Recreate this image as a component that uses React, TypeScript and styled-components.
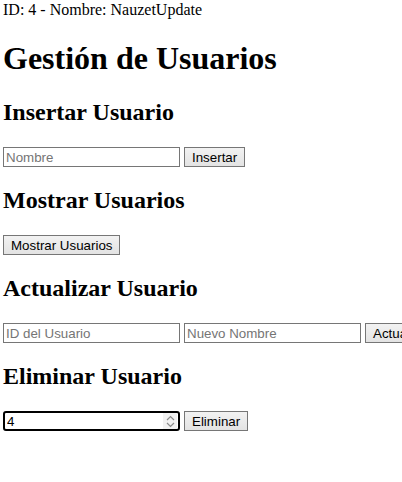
import React, { useState } from "react";
import styled, { createGlobalStyle } from "styled-components";

const Global = createGlobalStyle`
  html, body { margin: 0; padding: 0; background: #fff; }
  body { font-family: "Liberation Serif", "Times New Roman", serif; color: #000; }
`;

const Page = styled.div`
  padding: 1px 3px 0 3px;
  font-family: "Liberation Serif", "Times New Roman", serif;
  font-size: 16px;
  white-space: nowrap;
  overflow: hidden;
`;

const Info = styled.div`
  font-size: 16px;
  line-height: 18px;
`;

const Title = styled.h1`
  font-size: 32px;
  font-weight: bold;
  margin: 21px 0;
  line-height: 37px;
`;

const SectionTitle = styled.h2`
  font-size: 24px;
  font-weight: bold;
  margin: 19px 0 20px;
  line-height: 28px;
`;

const Row = styled.div`
  display: flex;
  gap: 4px;
  align-items: center;
  padding-top: 1px;
`;

const TextInput = styled.input<{ $focused?: boolean }>`
  box-sizing: border-box;
  width: 177px;
  height: 20px;
  margin: 0;
  padding: 1px 2px;
  font-family: "Liberation Sans", Arial, sans-serif;
  font-size: 13.33px;
  color: #000;
  background: #fff;
  border: ${(p) => (p.$focused ? "2px solid #000" : "1px solid #767676")};
  border-radius: ${(p) => (p.$focused ? "3px" : "0")};
  outline: none;
  flex: none;
  -moz-appearance: textfield;
  &::placeholder { color: #757575; }
  &::-webkit-inner-spin-button,
  &::-webkit-outer-spin-button { -webkit-appearance: none; margin: 0; }
`;

const NumberWrap = styled.div`
  position: relative;
  flex: none;
  display: flex;
`;

const Spinner = styled.div`
  position: absolute;
  right: 3px;
  top: 2px;
  bottom: 2px;
  width: 14px;
  background: #f1f1f1;
  display: flex;
  flex-direction: column;
  align-items: center;
  justify-content: center;
  gap: 1px;
  pointer-events: none;
`;

const Button = styled.button`
  box-sizing: border-box;
  height: 20px;
  margin: 0;
  padding: 1px 7px;
  font-family: "Liberation Sans", Arial, sans-serif;
  font-size: 13.33px;
  color: #000;
  background: linear-gradient(#f2f2f2, #e3e3e3);
  border: 1px solid #767676;
  border-radius: 0;
  flex: none;
`;

const Chevron = ({ up }: { up?: boolean }) => (
  <svg width="9" height="6" viewBox="0 0 9 6">
    <path
      d={up ? "M1 5 L4.5 1.5 L8 5" : "M1 1 L4.5 4.5 L8 1"}
      fill="none"
      stroke="#8a8a8a"
      strokeWidth="1.2"
    />
  </svg>
);

export default function App() {
  const [id, setId] = useState("4");
  return (
    <>
      <Global />
      <Page>
        <Info>ID: 4 - Nombre: NauzetUpdate</Info>
        <Title>Gestión de Usuarios</Title>

        <SectionTitle>Insertar Usuario</SectionTitle>
        <Row>
          <TextInput placeholder="Nombre" />
          <Button>Insertar</Button>
        </Row>

        <SectionTitle>Mostrar Usuarios</SectionTitle>
        <Row>
          <Button>Mostrar Usuarios</Button>
        </Row>

        <SectionTitle>Actualizar Usuario</SectionTitle>
        <Row>
          <TextInput placeholder="ID del Usuario" />
          <TextInput placeholder="Nuevo Nombre" />
          <Button>Actualizar</Button>
        </Row>

        <SectionTitle>Eliminar Usuario</SectionTitle>
        <Row>
          <NumberWrap>
            <TextInput type="number" $focused value={id} onChange={(e) => setId(e.target.value)} />
            <Spinner>
              <Chevron up />
              <Chevron />
            </Spinner>
          </NumberWrap>
          <Button>Eliminar</Button>
        </Row>
      </Page>
    </>
  );
}
